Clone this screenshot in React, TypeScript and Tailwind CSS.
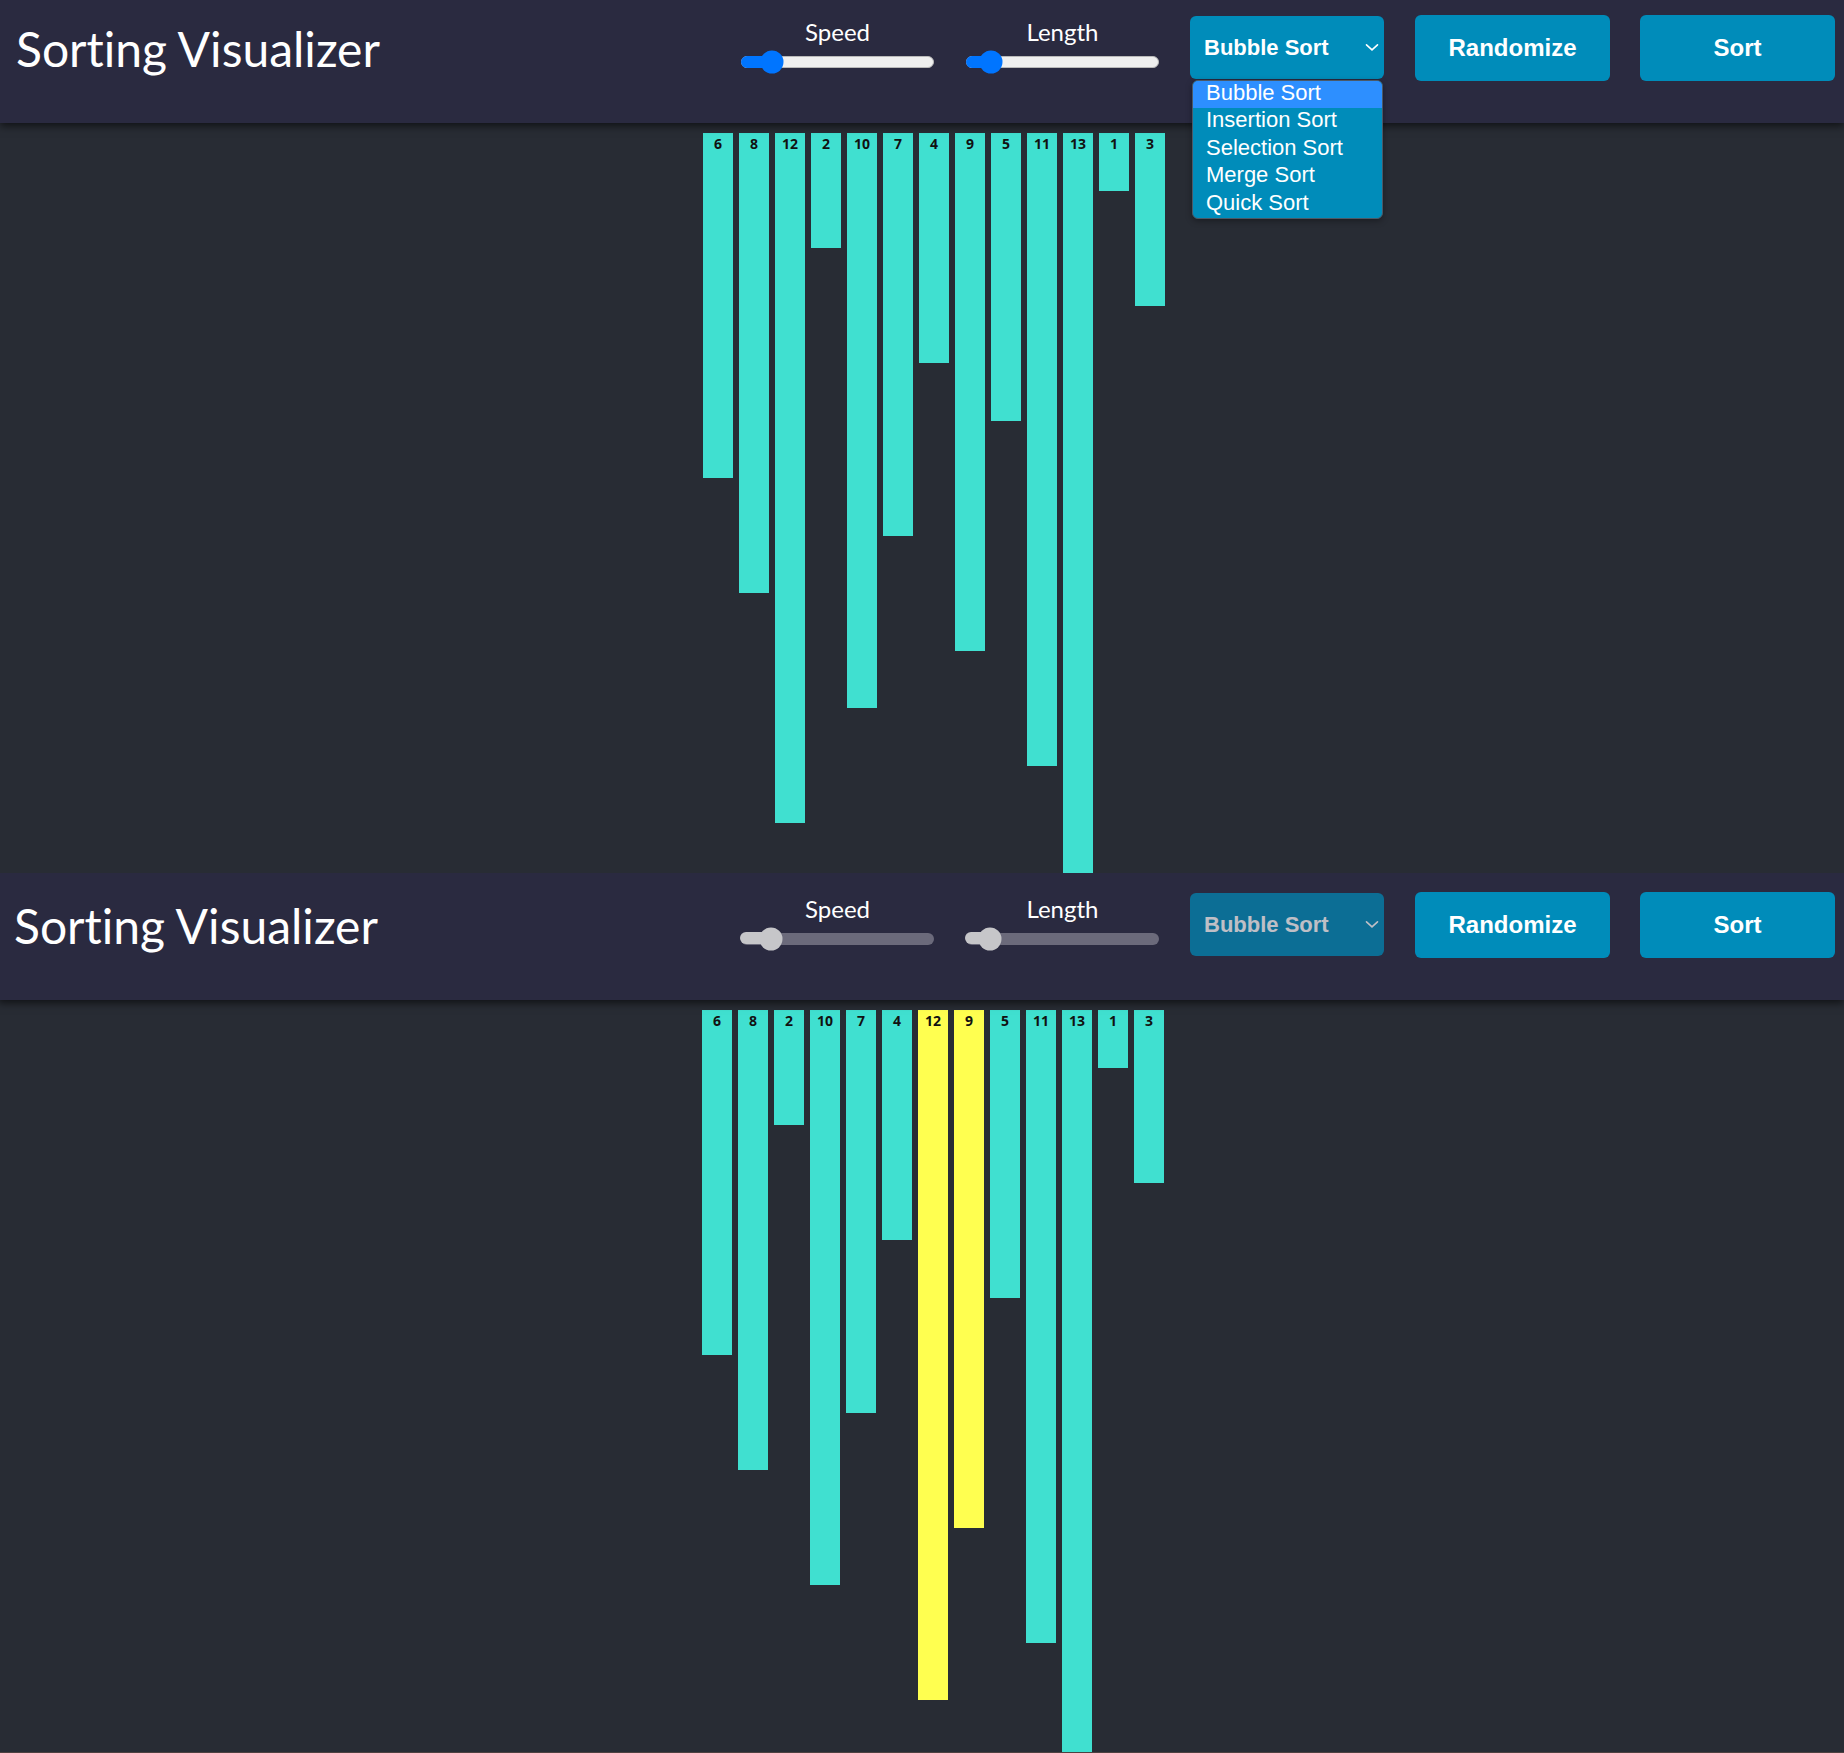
import React from 'react';

type Bar = { value: number; active?: boolean };

const UNIT = 57.5;
const ALGORITHMS = ['Bubble Sort', 'Insertion Sort', 'Selection Sort', 'Merge Sort', 'Quick Sort'];

const firstArray: Bar[] = [6, 8, 12, 2, 10, 7, 4, 9, 5, 11, 13, 1, 3].map((value) => ({ value }));
const secondArray: Bar[] = [6, 8, 2, 10, 7, 4, 12, 9, 5, 11, 13, 1, 3].map((value, i) => ({
  value,
  active: i === 6 || i === 7,
}));

const Chevron = () => (
  <svg width="14" height="9" viewBox="0 0 14 9" fill="none">
    <path d="M1.5 1.8l5.5 5 5.5-5" stroke="currentColor" strokeWidth="1.6" strokeLinecap="round" />
  </svg>
);

const RangeSlider: React.FC<{ label: string; thumbAt: number; disabled?: boolean; width: string }> = ({
  label,
  thumbAt,
  disabled,
  width,
}) => (
  <div className={`flex flex-col items-center pt-[3px] ${width}`}>
    <span className="font-['Lato',sans-serif] text-[24px] leading-[28px] text-white">{label}</span>
    <div
      className={`relative mt-[10px] h-[12px] w-full rounded-full ${
        disabled ? 'bg-[#6b6a7b]' : 'border border-[#b9b9b9] bg-[#efefef]'
      }`}
    >
      {/* filled part of the track */}
      <div
        className={`absolute -left-px -top-px h-[12px] rounded-l-full ${disabled ? 'bg-[#c6c6c9]' : 'bg-[#0075ff]'}`}
        style={{ width: thumbAt }}
      />
      <div
        className={`absolute top-1/2 h-[23px] w-[23px] -translate-x-1/2 -translate-y-1/2 rounded-full ${
          disabled ? 'bg-[#c6c6c9]' : 'bg-[#0075ff]'
        }`}
        style={{ left: thumbAt }}
      />
    </div>
  </div>
);

const AlgorithmSelect: React.FC<{ open?: boolean; disabled?: boolean }> = ({ open, disabled }) => (
  <div className="relative ml-[31px] mt-[1px]">
    <div
      className={`flex h-[63px] w-[194px] items-center justify-between rounded-[6px] bg-[#008cba] pl-[14px] pr-[5px] font-['Liberation_Sans',Arial,sans-serif] text-[22px] font-bold ${
        disabled ? 'text-white opacity-70' : 'text-white'
      }`}
    >
      <span>Bubble Sort</span>
      <Chevron />
    </div>
    {open && (
      <ul className="absolute left-[2px] right-[1px] top-[64px] z-20 overflow-hidden rounded-[6px] border border-[#4b5967] bg-[#008cba] font-['Liberation_Sans',Arial,sans-serif] text-[22px] text-white shadow-[0_2px_6px_rgba(0,0,0,0.35)]">
        {ALGORITHMS.map((name, i) => (
          <li key={name} className={`h-[27.4px] pl-[13px] leading-[23px] ${i === 0 ? 'bg-[#2d8fff]' : ''}`}>
            {name}
          </li>
        ))}
      </ul>
    )}
  </div>
);

const ActionButton: React.FC<{ label: string; className?: string }> = ({ label, className = '' }) => (
  <button
    className={`h-[66px] w-[195px] rounded-[6px] bg-[#008cba] font-['Liberation_Sans',Arial,sans-serif] text-[24px] font-bold text-white ${className}`}
  >
    {label}
  </button>
);

const Header: React.FC<{ sorting?: boolean; menuOpen?: boolean }> = ({ sorting, menuOpen }) => (
  <header className="relative z-10 flex h-[127px] items-start bg-[#2a2a40] pl-[16px] pr-[9px] pt-[19px] shadow-[0_3px_8px_rgba(0,0,0,0.6)]">
    <h1 className="mt-[10px] font-['Lato',sans-serif] text-[48px] leading-[48px] font-normal text-white [font-variant-ligatures:none]">
      Sorting Visualizer
    </h1>
    <div className="ml-auto flex items-start">
      <RangeSlider label="Speed" thumbAt={30} disabled={sorting} width="w-[193px]" />
      <div className="ml-[32px]">
        <RangeSlider label="Length" thumbAt={24} disabled={sorting} width="w-[193px]" />
      </div>
      <AlgorithmSelect open={menuOpen} disabled={sorting} />
      <ActionButton label="Randomize" className="ml-[31px]" />
      <ActionButton label="Sort" className="ml-[30px]" />
    </div>
  </header>
);

const BarChart: React.FC<{ bars: Bar[] }> = ({ bars }) => (
  <div className="flex justify-center gap-[6px] pl-[24px] pt-[10px]">
    {bars.map((bar, i) => (
      <div
        key={i}
        className={`flex w-[30px] shrink-0 justify-center pt-[2px] ${bar.active ? 'bg-[#ffff50]' : 'bg-[#40e0d0]'}`}
        style={{ height: Math.round(bar.value * UNIT) }}
      >
        <span className="font-['Open_Sans',sans-serif] text-[14px] font-bold leading-[18px] text-[#111]">
          {bar.value}
        </span>
      </div>
    ))}
  </div>
);

export default function App() {
  return (
    <div className="min-h-screen bg-[#282c34]">
      {/* Dropdown open, before sorting */}
      <section className="h-[873px] overflow-hidden">
        <div className="-mt-[4px]">
          <Header menuOpen />
          <BarChart bars={firstArray} />
        </div>
      </section>

      {/* While sorting: controls disabled, compared pair highlighted */}
      <section className="h-[880px] overflow-hidden border-b border-[#4e4141]">
        <div className="ml-[-2px] w-[calc(100%+2px)]">
          <Header sorting />
          <BarChart bars={secondArray} />
        </div>
      </section>
    </div>
  );
}
